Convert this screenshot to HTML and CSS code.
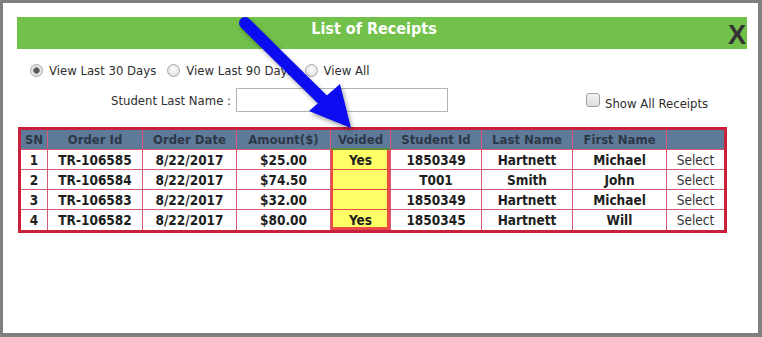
FILE: index.html
```html
<!DOCTYPE html>
<html>
<head>
<meta charset="utf-8">
<link rel="stylesheet" href="styles.css">
</head>
<body>
<div class="frame">
  <div class="titlebar">
    <span class="title">List of Receipts</span>
    <span class="close">X</span>
  </div>
  <div class="options">
    <label class="opt"><input type="radio" name="range" checked><span>View Last 30 Days</span></label>
    <label class="opt"><input type="radio" name="range"><span>View Last 90 Days</span></label>
    <label class="opt"><input type="radio" name="range"><span>View All</span></label>
  </div>
  <div class="search">
    <span class="lbl">Student Last Name :</span>
    <input type="text" class="name">
    <label class="showall"><input type="checkbox"><span>Show All Receipts</span></label>
  </div>
  <table class="grid">
    <colgroup>
      <col class="c-sn"><col class="c-oid"><col class="c-date"><col class="c-amt"><col class="c-void"><col class="c-sid"><col class="c-last"><col class="c-first"><col class="c-sel">
    </colgroup>
    <thead>
      <tr><th>SN</th><th>Order Id</th><th>Order Date</th><th>Amount($)</th><th class="vh">Voided</th><th>Student Id</th><th>Last Name</th><th>First Name</th><th class="last"></th></tr>
    </thead>
    <tbody>
      <tr><td>1</td><td>TR-106585</td><td>8/22/2017</td><td>$25.00</td><td class="v">Yes</td><td>1850349</td><td>Hartnett</td><td>Michael</td><td class="sel">Select</td></tr>
      <tr><td>2</td><td>TR-106584</td><td>8/22/2017</td><td>$74.50</td><td class="v"></td><td>T001</td><td>Smith</td><td>John</td><td class="sel">Select</td></tr>
      <tr><td>3</td><td>TR-106583</td><td>8/22/2017</td><td>$32.00</td><td class="v"></td><td>1850349</td><td>Hartnett</td><td>Michael</td><td class="sel">Select</td></tr>
      <tr class="lastrow"><td>4</td><td>TR-106582</td><td>8/22/2017</td><td>$80.00</td><td class="v">Yes</td><td>1850345</td><td>Hartnett</td><td>Will</td><td class="sel">Select</td></tr>
    </tbody>
  </table>
  <svg class="arrow" width="762" height="337" viewBox="0 0 762 337">
    <line x1="245" y1="23" x2="326" y2="103" stroke="#0c0cf0" stroke-width="12" stroke-linecap="round"/>
    <polygon points="309,111 340,84 351,128" fill="#0c0cf0"/>
  </svg>
</div>
</body>
</html>
```

FILE: styles.css
```css
html, body {
  margin: 0;
  padding: 0;
  background: #ffffff;
}
.frame {
  position: relative;
  box-sizing: border-box;
  width: 762px;
  height: 337px;
  border: 3px solid #808080;
  border-right-width: 4px;
  border-bottom-width: 4px;
  background: #ffffff;
  padding: 14px 11px 0 14px;
  font-family: "DejaVu Sans Condensed", "DejaVu Sans", sans-serif;
  font-stretch: condensed;
  color: #2e2e2e;
}
.titlebar {
  position: relative;
  height: 32px;
  background: #71c14b;
  text-align: center;
  padding-right: 16px;
  box-sizing: border-box;
}
.title {
  display: inline-block;
  color: #ffffff;
  font-weight: bold;
  font-size: 16px;
  line-height: 20px;
  padding-top: 2px;
}
.close {
  position: absolute;
  right: 1px;
  top: 3px;
  font-family: "Liberation Sans", Arial, sans-serif;
  font-stretch: normal;
  font-weight: bold;
  font-size: 27px;
  line-height: 30px;
  color: #333333;
}
.options {
  display: flex;
  align-items: center;
  height: 20px;
  margin-top: 11px;
  padding-left: 13px;
  font-size: 13px;
}
.opt {
  display: flex;
  align-items: center;
  gap: 6px;
  margin-right: 11px;
}
.opt input {
  appearance: none;
  -webkit-appearance: none;
  margin: 0;
  width: 13px;
  height: 13px;
  border-radius: 50%;
  border: 1px solid #a8a8a8;
  box-sizing: border-box;
  background: radial-gradient(circle at 50% 40%, #ffffff 0%, #e6e6e6 60%, #d4d4d4 100%);
}
.opt input:checked {
  background: radial-gradient(circle, #5a5a5a 0, #5a5a5a 2.4px, #9a9a9a 3.2px, #e8e8e8 3.6px, #d8d8d8 100%);
}
.search {
  display: flex;
  align-items: center;
  margin-top: 8px;
  height: 24px;
  padding-left: 93px;
  font-size: 13px;
}
.lbl {
  width: 121px;
  text-align: right;
  white-space: nowrap;
  margin-right: 5px;
}
.name {
  box-sizing: border-box;
  width: 212px;
  height: 24px;
  margin: 0;
  border: 1px solid #b4b4b4;
  background: #ffffff;
}
.showall {
  display: flex;
  align-items: center;
  gap: 5px;
  margin-left: 138px;
  margin-top: 6px;
}
.showall input {
  appearance: none;
  -webkit-appearance: none;
  margin: 0;
  width: 14px;
  height: 14px;
  box-sizing: border-box;
  border: 1px solid #a0a0a0;
  border-radius: 3px;
  background: linear-gradient(#f4f4f4, #dcdcdc);
  position: relative;
  top: -3px;
}
.grid {
  margin-top: 15px;
  margin-left: 1px;
  width: 709px;
  box-sizing: border-box;
  table-layout: fixed;
  border-collapse: separate;
  border-spacing: 0;
  border: 3px solid #c9203d;
  font-size: 13.5px;
}
.c-sn { width: 27px; }
.c-oid { width: 95px; }
.c-date { width: 94px; }
.c-amt { width: 94px; }
.c-void { width: 60px; }
.c-sid { width: 91px; }
.c-last { width: 91px; }
.c-first { width: 94px; }
.c-sel { width: 57px; }
.grid th, .grid td {
  padding: 0;
  height: 19px;
  text-align: center;
  vertical-align: middle;
  border-right: 1px solid #d75a74;
  border-bottom: 1px solid #d75a74;
  white-space: nowrap;
  overflow: hidden;
}
.grid th {
  background: #5e7a9b;
  color: #2c3846;
  font-weight: bold;
  font-size: 13px;
}
.grid th.vh {
  border-bottom: 2px solid #5f8a3a;
  height: 18px;
}
.grid td {
  background: #ffffff;
  color: #1e1e1e;
  font-weight: bold;
}
.grid th.last, .grid td.sel {
  border-right: none;
}
.grid .lastrow td {
  border-bottom: none;
}
.grid td.sel {
  font-weight: normal;
  color: #333333;
}
.grid td.v {
  background: #ffff66;
  border-bottom: 1px solid #e0464a;
  box-shadow: inset 2px 0 0 #ee4a44, inset -3px 0 0 #ee4a44;
}
.grid .lastrow td.v {
  box-shadow: inset 2px 0 0 #ee4a44, inset -3px 0 0 #ee4a44, inset 0 -2px 0 #ee4a44;
}
.arrow {
  position: absolute;
  left: -3px;
  top: -3px;
  pointer-events: none;
  filter: drop-shadow(2px 3px 2px rgba(0, 0, 0, 0.35));
}
```
